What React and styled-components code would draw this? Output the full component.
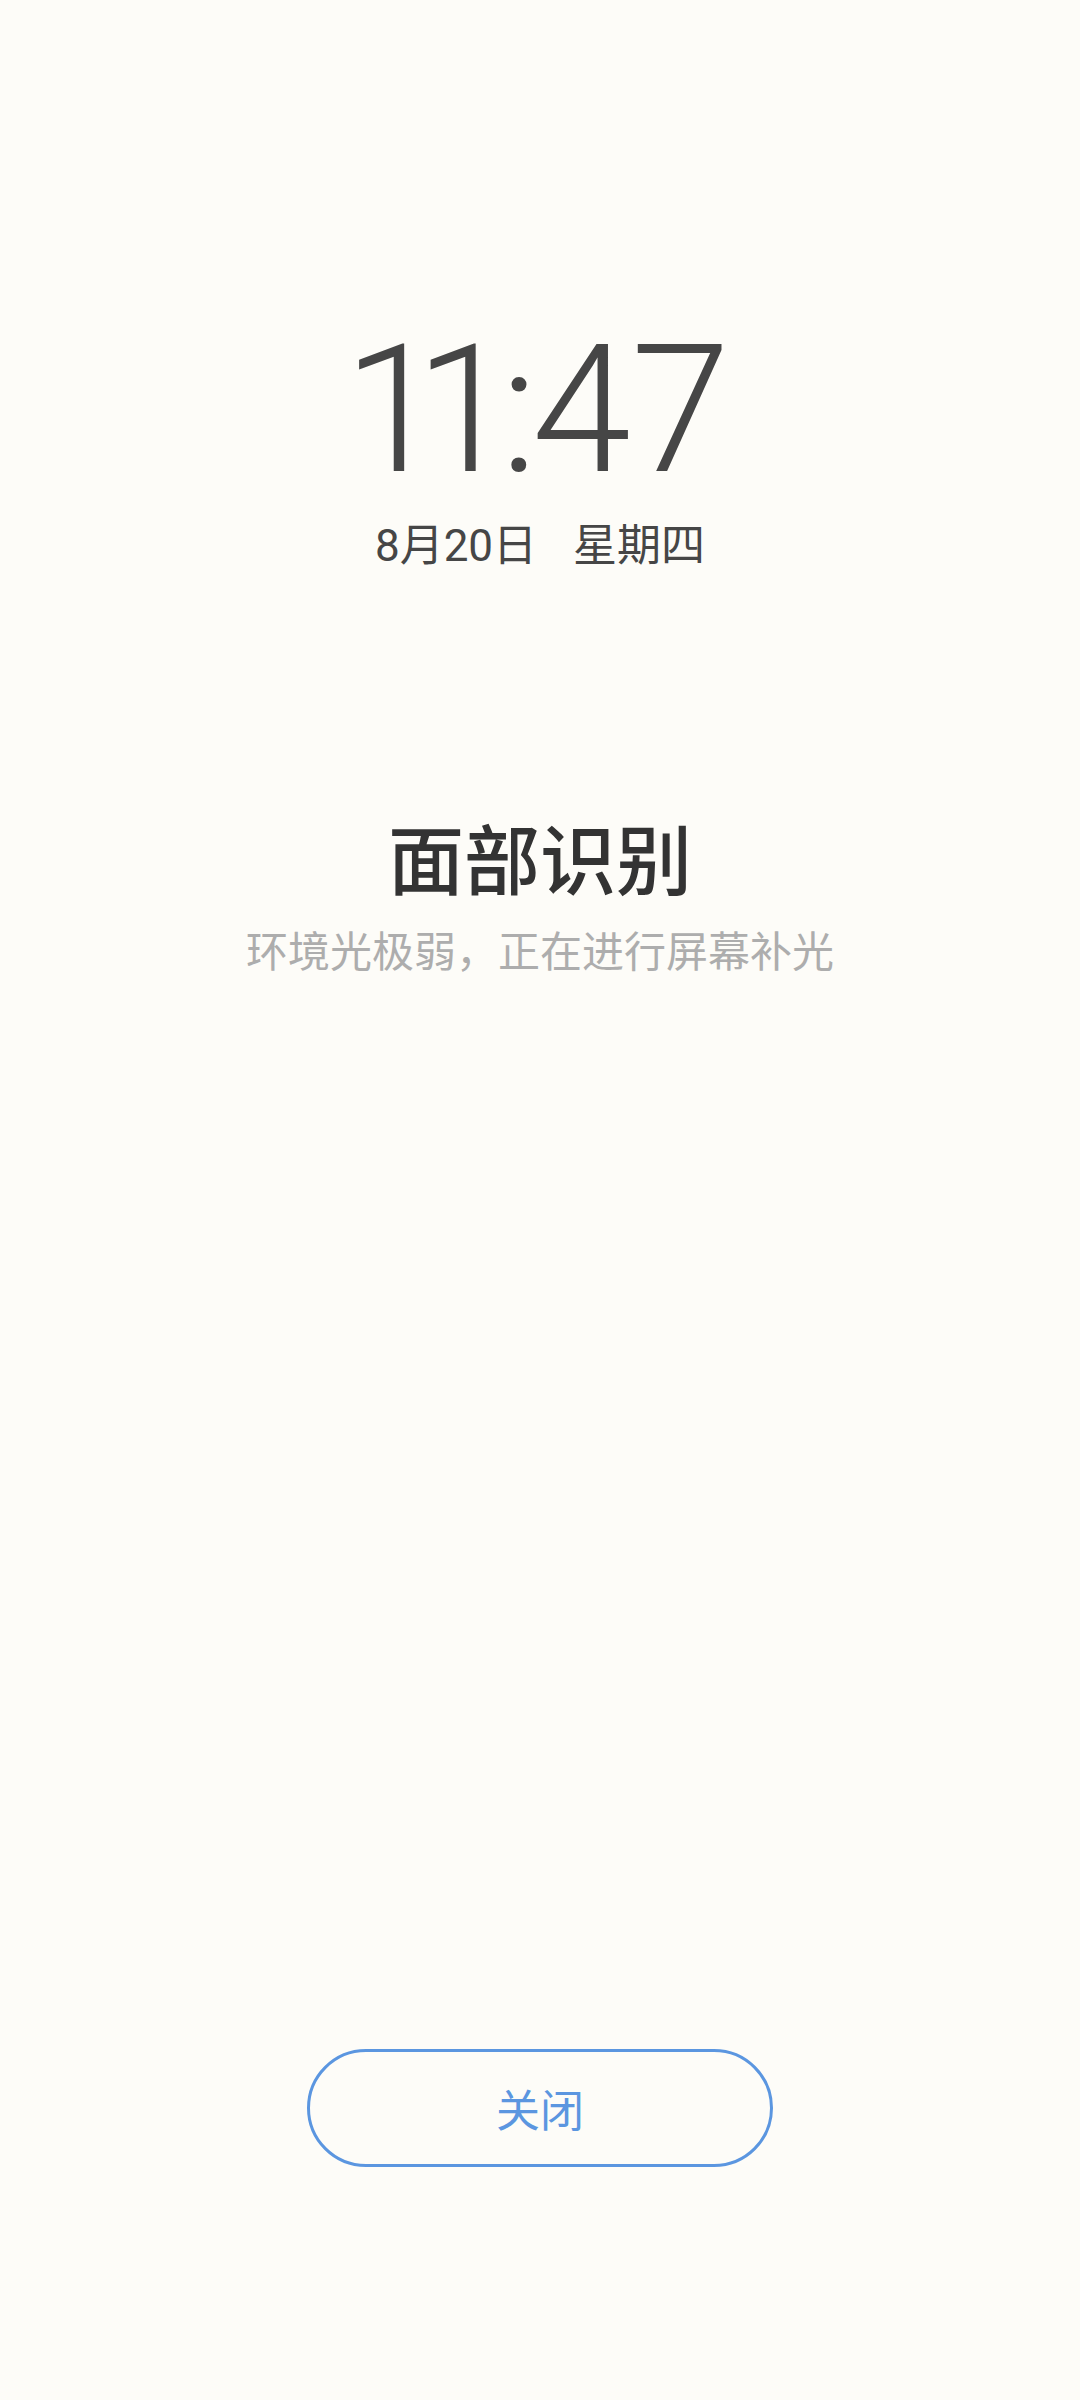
import styled, { createGlobalStyle } from 'styled-components';

const GlobalStyle = createGlobalStyle`
  html, body {
    margin: 0;
    padding: 0;
    background: #fdfcf8;
  }
  body {
    font-family: Roboto, "Noto Sans CJK SC", sans-serif;
  }
`;

const Screen = styled.div`
  width: 1080px;
  height: 2400px;
  background: #fdfcf8;
  display: flex;
  flex-direction: column;
  align-items: center;
  box-sizing: border-box;
  padding-top: 321px;
`;

const Clock = styled.div`
  display: flex;
  font-family: Roboto, sans-serif;
  font-weight: 300;
  font-size: 179px;
  line-height: 1;
  color: #464646;
  margin-left: -6px;
`;

const ClockChar = styled.span`
  letter-spacing: ${(p) => p.$tight || 0}px;
`;

const DateLine = styled.div`
  margin-top: 24px;
  font-family: Roboto, "Noto Sans CJK SC", sans-serif;
  font-size: 44px;
  line-height: 1;
  color: #464646;
  display: flex;
  gap: 36px;
`;

const FaceBlock = styled.div`
  margin-top: 250px;
  display: flex;
  flex-direction: column;
  align-items: center;
`;

const Title = styled.div`
  font-family: "Noto Sans CJK SC", sans-serif;
  font-weight: 500;
  font-size: 76px;
  line-height: 1;
  color: #333333;
`;

const Hint = styled.div`
  margin-top: 34px;
  font-family: "Noto Sans CJK SC", sans-serif;
  font-size: 42px;
  line-height: 1;
  color: #adadad;
`;

const Spacer = styled.div`
  flex: 1;
`;

const CloseButton = styled.button`
  width: 466px;
  height: 118px;
  margin-bottom: 233px;
  border: 3px solid #5b96e0;
  border-radius: 59px;
  background: transparent;
  color: #5b96e0;
  font-family: "Noto Sans CJK SC", sans-serif;
  font-size: 44px;
  box-sizing: border-box;
  padding: 0;
  cursor: pointer;
`;

const App = () => {
  return (
    <>
      <GlobalStyle />
      <Screen>
        <Clock>
          <ClockChar $tight={-28}>1</ClockChar>
          <ClockChar $tight={-14}>1</ClockChar>
          <ClockChar $tight={-6}>:</ClockChar>
          <ClockChar>4</ClockChar>
          <ClockChar>7</ClockChar>
        </Clock>
        <DateLine>
          <span>8月20日</span>
          <span>星期四</span>
        </DateLine>
        <FaceBlock>
          <Title>面部识别</Title>
          <Hint>环境光极弱，正在进行屏幕补光</Hint>
        </FaceBlock>
        <Spacer />
        <CloseButton>关闭</CloseButton>
      </Screen>
    </>
  );
};

export default App;
